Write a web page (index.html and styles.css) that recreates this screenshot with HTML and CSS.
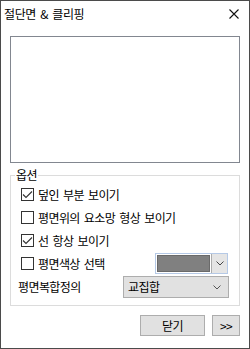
FILE: index.html
```
<!DOCTYPE html>
<html>
	<head>
		<meta charset="UTF-8">
		<title>절단면 &amp; 클리핑</title>
		<link rel="stylesheet" href="styles.css">
	</head>
	<body>
		<div class="window">
			<div class="titlebar">
				<span class="title">절단면 &amp; 클리핑</span>
				<svg class="close" width="10" height="10" viewBox="0 0 10 10">
					<path d="M0.5 0.5 L9.5 9.5 M9.5 0.5 L0.5 9.5" stroke="#111" stroke-width="1.1" fill="none"/>
				</svg>
			</div>
			<div class="content">
				<div class="listbox"></div>
				<fieldset class="options">
					<legend>옵션</legend>
					<div class="rows">
						<div class="check-row">
							<span class="box"><svg width="11" height="11" viewBox="0 0 11 11"><path d="M1 5.5 L4 8.5 L10 2.5" stroke="#333" stroke-width="1.1" fill="none"/></svg></span>
							<span class="label">덮인 부분 보이기</span>
						</div>
						<div class="check-row">
							<span class="box"></span>
							<span class="label">평면위의 요소망 형상 보이기</span>
						</div>
						<div class="check-row">
							<span class="box"><svg width="11" height="11" viewBox="0 0 11 11"><path d="M1 5.5 L4 8.5 L10 2.5" stroke="#333" stroke-width="1.1" fill="none"/></svg></span>
							<span class="label">선 항상 보이기</span>
						</div>
						<div class="check-row">
							<span class="box"></span>
							<span class="label">평면색상 선택</span>
							<div class="color-pick">
								<span class="swatch"></span>
								<span class="drop">
									<svg width="8" height="5" viewBox="0 0 8 5"><path d="M0.5 0.5 L4 4 L7.5 0.5" stroke="#444" fill="none"/></svg>
								</span>
							</div>
						</div>
						<div class="combo-row">
							<span class="label">평면복합정의</span>
							<div class="combo">
								<span class="label">교집합</span>
								<svg width="8" height="5" viewBox="0 0 8 5"><path d="M0.5 0.5 L4 4 L7.5 0.5" stroke="#555" fill="none"/></svg>
							</div>
						</div>
					</div>
				</fieldset>
				<div class="buttons">
					<div class="btn btn-close">닫기</div>
					<div class="btn btn-more">&gt;&gt;</div>
				</div>
			</div>
		</div>
	</body>
</html>
```
FILE: styles.css
```
*{
	margin: 0;
	padding: 0;
	box-sizing: border-box;
}
body{
	font-family: "Noto Sans CJK KR", "Noto Sans", sans-serif;
	font-size: 12px;
	word-spacing: 2px;
	color: #000;
	background: #fff;
}
.window{
	width: 250px;
	height: 349px;
	border: 1px solid #4b4b4b;
	background: #fff;
}
.titlebar{
	height: 25px;
	display: flex;
	align-items: center;
	padding-left: 3px;
}
.title{
	flex: 1;
	letter-spacing: -0.4px;
	line-height: 16px;
}
.close{
	margin-right: 10px;
}
.content{
	padding: 10px 9px 0 9px;
}
.listbox{
	height: 127px;
	border: 1px solid #828790;
	background: #fff;
}
.options{
	margin-top: 4px;
	border: 1px solid #dcdcdc;
	padding: 0;
	min-width: 0;
}
.options legend{
	margin-left: 4px;
	padding: 0 1px;
	line-height: 16px;
	letter-spacing: -0.6px;
}
.rows{
	padding: 0 11px 6px 10px;
}
.check-row{
	display: flex;
	align-items: center;
	height: 23px;
}
.box{
	width: 13px;
	height: 13px;
	border: 1px solid #333;
	background: #fff;
	display: flex;
	align-items: center;
	justify-content: center;
	flex-shrink: 0;
}
.label{
	margin-left: 4px;
	letter-spacing: -0.6px;
	line-height: 16px;
	white-space: nowrap;
}
.color-pick{
	margin-left: auto;
	width: 73px;
	height: 21px;
	border: 1px solid #b5c9e6;
	display: flex;
	padding: 1px 0 1px 1px;
}
.swatch{
	width: 53px;
	background: #808080;
	border: 1px solid #6a6a6a;
}
.drop{
	flex: 1;
	margin-left: 1px;
	margin-top: -1px;
	margin-bottom: -1px;
	background: #e5e5e5;
	border-left: 1px solid #adadad;
	display: flex;
	align-items: center;
	justify-content: center;
}
.combo-row{
	display: flex;
	align-items: center;
	height: 24px;
	margin-left: -3px;
	margin-right: -1px;
}
.combo-row > .label{
	margin-left: 0;
}
.combo{
	margin-left: auto;
	width: 106px;
	height: 22px;
	border: 1px solid #adadad;
	background: #e1e1e1;
	display: flex;
	align-items: center;
	padding: 0 7px 0 4px;
}
.combo .label{
	margin-left: 0;
	flex: 1;
}
.buttons{
	display: flex;
	justify-content: flex-end;
	gap: 7px;
	margin-top: 9px;
}
.btn{
	height: 21px;
	border: 1px solid #adadad;
	background: #e1e1e1;
	display: flex;
	align-items: center;
	justify-content: center;
	letter-spacing: -0.6px;
	line-height: 16px;
}
.btn-close{
	width: 65px;
}
.btn-more{
	width: 28px;
}
```
